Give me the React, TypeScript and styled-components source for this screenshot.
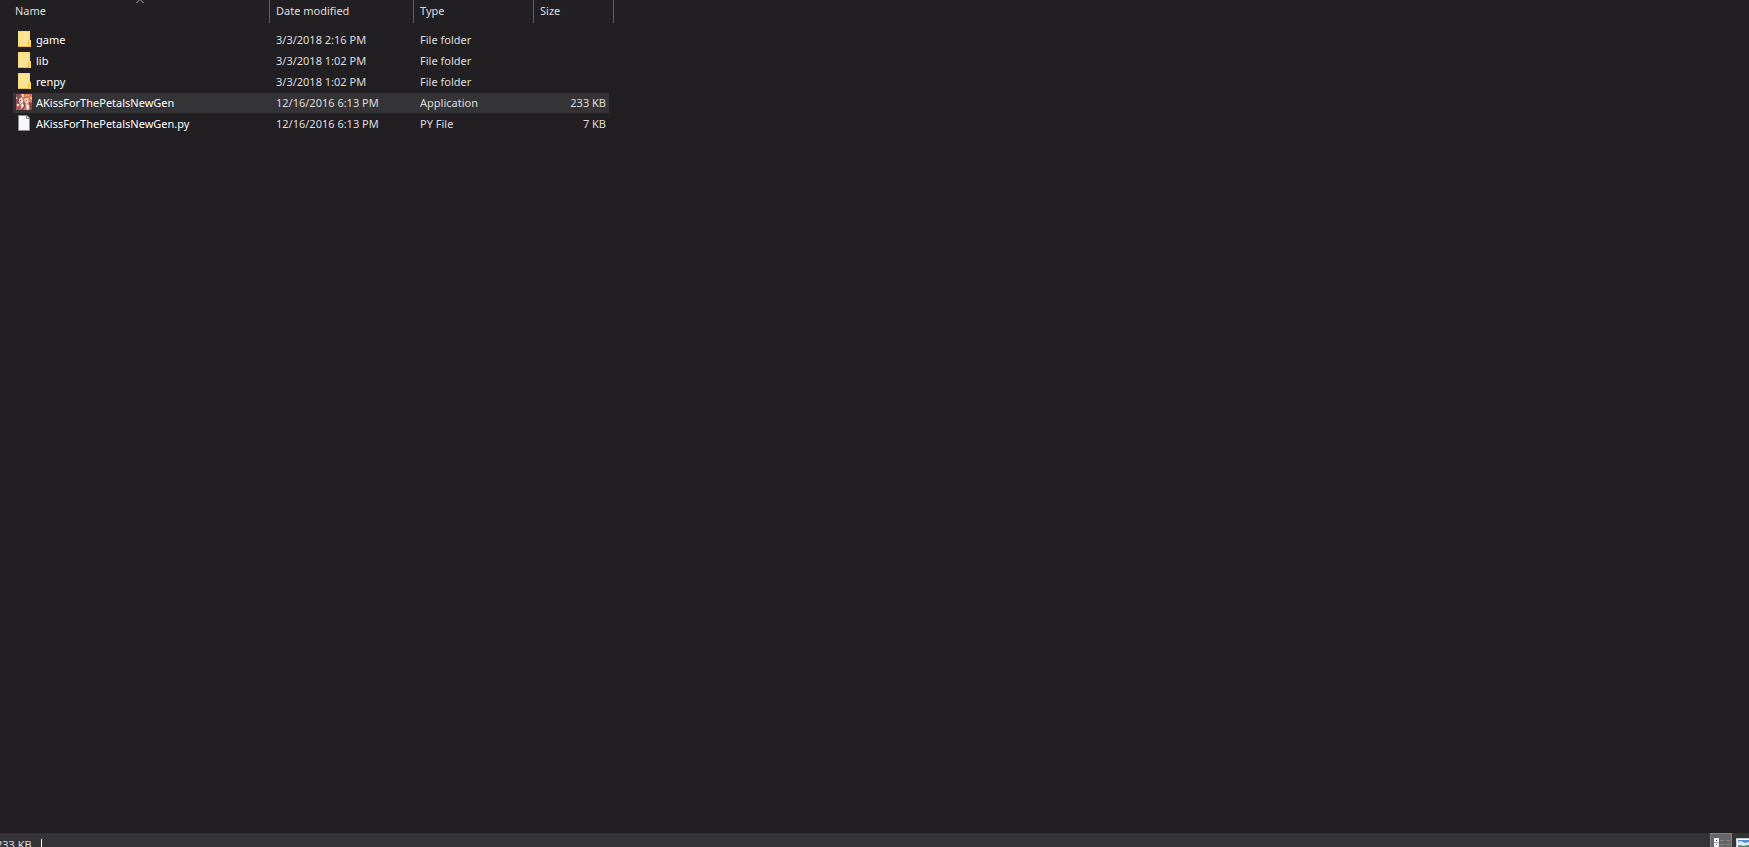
import React from "react";
import styled, { createGlobalStyle, css } from "styled-components";

const GlobalStyle = createGlobalStyle`
  body {
    margin: 0;
    background: #211f22;
    color: #dededf;
    font-family: "Noto Sans", "Open Sans", sans-serif;
    font-size: 11px;
    line-height: 20px;
  }
`;

const Window = styled.div`
  display: flex;
  flex-direction: column;
  height: 100vh;
  overflow: hidden;
`;

const Pane = styled.main`
  flex: 1;
  min-height: 0;
  padding-left: 13px;
`;

const FileTable = styled.table`
  table-layout: fixed;
  width: 601px;
  border-spacing: 0;
`;

const Column = styled.col<{ $width: number }>`
  width: ${(p) => p.$width}px;
`;

const HeaderCell = styled.th`
  position: relative;
  padding: 0 0 7px;
  font-weight: 400;
`;

const SortButton = styled.button<{ $first?: boolean }>`
  display: block;
  width: 100%;
  height: 23px;
  padding: 1px 0 2px ${(p) => (p.$first ? 2 : 6)}px;
  border: 0;
  border-right: 1px solid #636264;
  background: none;
  color: inherit;
  font: inherit;
  text-align: left;
`;

const SortMark = styled.svg`
  position: absolute;
  top: 0;
  left: 123px;
`;

const Row = styled.tr<{ $selected?: boolean }>`
  ${(p) =>
    p.$selected &&
    css`
      td {
        background-color: #343335;
      }
    `}
`;

const Cell = styled.td<{ $size?: boolean }>`
  height: 20px;
  padding: 0 0 0 6px;
  border-bottom: 1px solid transparent;
  background-clip: padding-box;
  white-space: nowrap;
  ${(p) =>
    p.$size &&
    css`
      padding-right: 3px;
      border-right: 5px solid transparent;
      text-align: right;
    `}
`;

const NameCell = styled(Cell)`
  padding-left: 3px;
  color: #fff;
`;

const FileName = styled.span`
  display: flex;
  gap: 4px;
  height: 20px;
`;

const FileIcon = styled.svg`
  flex: none;
  width: 16px;
  height: 16px;
  margin-top: 1px;
`;

const StatusBar = styled.footer`
  display: flex;
  justify-content: space-between;
  height: 14px;
  overflow: hidden;
  background: #343335;
`;

const StatusInfo = styled.div`
  display: flex;
  gap: 9px;
  margin-left: -4px;
`;

const StatusText = styled.span`
  margin-top: 2px;
`;

const StatusDivider = styled.span`
  width: 1px;
  height: 12px;
  margin-top: 6px;
  background: #fff;
`;

const ViewButtons = styled.div`
  display: flex;
`;

const ViewButton = styled.button<{ $active?: boolean }>`
  width: ${(p) => (p.$active ? 22 : 17)}px;
  height: 22px;
  padding: 0;
  overflow: hidden;
  border: 0;
  background: ${(p) => (p.$active ? "#666567" : "transparent")};
  box-shadow: ${(p) => (p.$active ? "inset 0 0 0 1px #828183" : "none")};
`;

const FolderIcon = () => (
  <FileIcon viewBox="0 0 16 16" aria-hidden="true">
    <path d="M2 0h12v9h1v7H2z" fill="#ffd867" />
    <path d="M3 1h10v14H3z" fill="#ffe394" />
    <path d="M2 15h11v1H2zM12 10h1v6h-1z" fill="#f0bd3f" />
    <path d="M13 10h1v5h-1z" fill="#ffe394" />
  </FileIcon>
);

const DocumentIcon = () => (
  <FileIcon viewBox="0 0 16 16" aria-hidden="true">
    <path d="M2 0h9l3 3v13H2z" fill="#8c8c8e" />
    <path d="M3 1h7v3h3v11H3z" fill="#f8f8fa" />
    <path d="M11 1l2 2h-2z" fill="#e4e4e6" />
  </FileIcon>
);

const AppIcon = () => (
  <FileIcon viewBox="0 0 16 16" aria-hidden="true">
    <path d="M0 0h16v16H0z" fill="#c8806e" />
    <path d="M0 0h5l2 3-3 2-1 4-3 1z" fill="#8c5054" />
    <path d="M5 0h3v3H6z" fill="#f3cdbb" />
    <path d="M8 0h7l1 8-3-1-1-3-4 1z" fill="#e27a50" />
    <path d="M10 1h3v1h-3z" fill="#f7b183" />
    <path d="M3 5l3-2 1 5-3 2zM8 5l4-1 1 4-3 2z" fill="#fbe0cc" />
    <path d="M4 6h1v1H4zM10 6h1v1h-1z" fill="#7c3a40" />
    <path d="M0 10l3-1 2 4-1 3H0z" fill="#b4584e" />
    <path d="M1 10h2v2H1zM5 11l2-2 1 3-2 3zM10 10l3 1v4l-2 1z" fill="#fff0e4" />
    <path d="M7 8l2 1v4l-2 3H5l3-4zM13 8l3 1v7h-2z" fill="#92403f" />
    <path d="M14 3h2v2h-2zM0 3h1v2H0z" fill="#f2c0a8" />
  </FileIcon>
);

type Entry = {
  name: string;
  date: string;
  type: string;
  size: string;
  icon: () => React.JSX.Element;
  selected?: boolean;
};

const entries: Entry[] = [
  { name: "game", date: "3/3/2018 2:16 PM", type: "File folder", size: "", icon: FolderIcon },
  { name: "lib", date: "3/3/2018 1:02 PM", type: "File folder", size: "", icon: FolderIcon },
  { name: "renpy", date: "3/3/2018 1:02 PM", type: "File folder", size: "", icon: FolderIcon },
  { name: "AKissForThePetalsNewGen", date: "12/16/2016 6:13 PM", type: "Application", size: "233 KB", icon: AppIcon, selected: true },
  { name: "AKissForThePetalsNewGen.py", date: "12/16/2016 6:13 PM", type: "PY File", size: "7 KB", icon: DocumentIcon },
];

const columns = [
  { label: "Name", width: 257 },
  { label: "Date modified", width: 144 },
  { label: "Type", width: 120 },
  { label: "Size", width: 80 },
];

export default function App() {
  return (
    <Window>
      <GlobalStyle />
      <Pane>
        <FileTable>
          <colgroup>
            {columns.map((c) => (
              <Column key={c.label} $width={c.width} />
            ))}
          </colgroup>
          <thead>
            <tr>
              {columns.map((c, i) => (
                <HeaderCell key={c.label} scope="col" aria-sort={i === 0 ? "ascending" : undefined}>
                  <SortButton type="button" $first={i === 0}>
                    {c.label}
                  </SortButton>
                  {i === 0 && (
                    <SortMark width="8" height="3" viewBox="0 0 8 3" aria-hidden="true">
                      <path d="M0.5 3L4 -0.5L7.5 3" fill="none" stroke="#a5a4a6" />
                    </SortMark>
                  )}
                </HeaderCell>
              ))}
            </tr>
          </thead>
          <tbody>
            {entries.map((e) => (
              <Row key={e.name} $selected={e.selected}>
                <NameCell>
                  <FileName>
                    <e.icon />
                    {e.name}
                  </FileName>
                </NameCell>
                <Cell>{e.date}</Cell>
                <Cell>{e.type}</Cell>
                <Cell $size>{e.size}</Cell>
              </Row>
            ))}
          </tbody>
        </FileTable>
      </Pane>
      <StatusBar>
        <StatusInfo>
          <StatusText>233 KB</StatusText>
          <StatusDivider />
        </StatusInfo>
        <ViewButtons>
          <ViewButton type="button" $active aria-label="Details view">
            <svg width="22" height="22" viewBox="0 0 22 22" aria-hidden="true">
              <path d="M4 5h5v17H4z" fill="#f4f4f4" />
              <path d="M6 7h1v1H6z" fill="#444" />
              <path d="M6 11h1v1H6z" fill="#2c6ad0" />
              <path d="M4 9h5v1H4z" fill="#a9a9ab" />
              <path d="M10 7h4v1h-4zM16 7h4v1h-4zM10 11h4v1h-4zM16 11h4v1h-4z" fill="#858486" />
            </svg>
          </ViewButton>
          <ViewButton type="button" aria-label="Large thumbnails view">
            <svg width="17" height="22" viewBox="0 0 17 22" aria-hidden="true">
              <path d="M4 5h13v17H4z" fill="#c8c8ca" />
              <path d="M5 6h12v16H5z" fill="#fff" />
              <path d="M6 7h11v15H6z" fill="#4a90da" />
              <path d="M6 9l3-1 4 2 4-1v3l-5 1-6-1z" fill="#d8ecfb" />
              <path d="M6 12l5 1 6-1v2H6z" fill="#4d8c5a" />
            </svg>
          </ViewButton>
        </ViewButtons>
      </StatusBar>
    </Window>
  );
}
